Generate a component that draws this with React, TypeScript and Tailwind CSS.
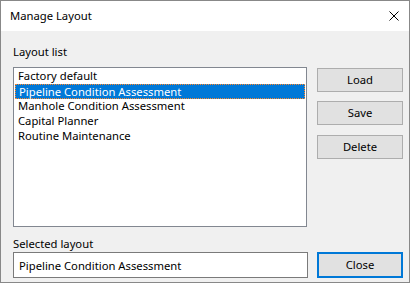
const layouts = [
  "Factory default",
  "Pipeline Condition Assessment",
  "Manhole Condition Assessment",
  "Capital Planner",
  "Routine Maintenance",
];

const font = { fontFamily: '"Segoe UI", "Noto Sans", sans-serif' };

function DialogButton({ label, focused }: { label: string; focused?: boolean }) {
  return (
    <button
      className={
        "w-[86px] bg-[#e1e1e1] text-[11.25px] leading-[14px] text-black flex items-center justify-center " +
        (focused ? "h-[26px] border-2 border-[#0078d7]" : "h-[24px] border border-[#adadad]")
      }
    >
      {label}
    </button>
  );
}

export default function App() {
  const selected = 1;

  return (
    <div
      className="w-[410px] h-[283px] border border-[#888888] flex flex-col bg-[#f0f0f0] text-[11.25px] leading-[15px] text-black"
      style={font}
    >
      <div className="h-[30px] bg-white flex items-center justify-between pl-[9px] pr-[10px]">
        <span className="pb-[1px]">Manage Layout</span>
        <svg width="10" height="10" viewBox="0 0 10 10">
          <path d="M0.5 0.5 L9.5 9.5 M9.5 0.5 L0.5 9.5" stroke="#000" strokeWidth="1" />
        </svg>
      </div>

      <div className="flex-1 pl-[12px] pr-[6px] pt-[13px]">
        <div className="h-[15px]">Layout list</div>
        <div className="flex mt-[8px]">
          <div className="w-[294px] h-[160px] bg-white border border-[#828790] p-[1px]">
            {layouts.map((name, i) => (
              <div
                key={name}
                className={
                  "h-[15px] pl-[3px] whitespace-nowrap leading-[14px] " +
                  (i === selected
                    ? "bg-[#0078d7] text-white border border-dotted border-[#ff8728] pl-[2px] leading-[12px]"
                    : "")
                }
              >
                {name}
              </div>
            ))}
          </div>
          <div className="ml-[10px] mt-[1px] flex flex-col">
            <DialogButton label="Load" />
            <div className="mt-[9px]">
              <DialogButton label="Save" />
            </div>
            <div className="mt-[10px]">
              <DialogButton label="Delete" />
            </div>
          </div>
        </div>

        <div className="h-[15px] mt-[9px]">Selected layout</div>
        <div className="flex mt-[1px]">
          <div className="w-[295px] h-[26px] bg-white border border-[#7a7a7a] flex items-center pl-[5px]">
            Pipeline Condition Assessment
          </div>
          <div className="ml-[9px]">
            <DialogButton label="Close" focused />
          </div>
        </div>
      </div>
    </div>
  );
}
